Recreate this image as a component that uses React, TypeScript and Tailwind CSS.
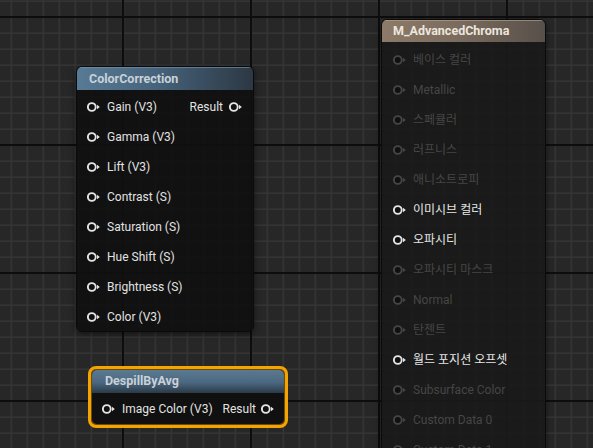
import React from "react";

const FONT = "font-['Roboto','Noto_Sans_CJK_KR',sans-serif]";

type PinProps = { on?: boolean };

function Pin({ on = true }: PinProps) {
  const c = on ? "#e4e4e4" : "#454545";
  return (
    <svg width="13" height="10" viewBox="0 0 13 10" className="shrink-0">
      <circle cx="4.8" cy="5" r="3.9" fill="#101010" stroke={c} strokeWidth="1.9" />
      <path d="M10 2.7 L12.8 5 L10 7.3 Z" fill={c} />
    </svg>
  );
}

function InRow({ label, on = true, right }: { label: string; on?: boolean; right?: string }) {
  return (
    <div className="h-[30px] flex items-center pl-[10px] pr-[11px]">
      <Pin on={on} />
      <span className={`ml-[7px] text-[12px] ${on ? "text-[#e2e2e2]" : "text-[#474747]"}`}>{label}</span>
      {right && (
        <div className="ml-auto flex items-center gap-[6px]">
          <span className="text-[12px] text-[#e2e2e2]">{right}</span>
          <Pin />
        </div>
      )}
    </div>
  );
}

function GridCanvas() {
  return (
    <svg className="absolute inset-0" width="593" height="448">
      <defs>
        <pattern id="minor" x="0" y="0" width="16" height="16" patternUnits="userSpaceOnUse">
          <rect x="10.5" y="0" width="1.6" height="16" fill="#343434" />
          <rect x="0" y="0.4" width="16" height="1.6" fill="#343434" />
        </pattern>
        <pattern id="major" x="0" y="0" width="128" height="128" patternUnits="userSpaceOnUse">
          <rect x="122" y="0" width="2" height="128" fill="#0d0d0d" />
          <rect x="0" y="16" width="128" height="2" fill="#0d0d0d" />
        </pattern>
      </defs>
      <rect width="593" height="448" fill="#272727" />
      <rect width="593" height="448" fill="url(#minor)" />
      <rect width="593" height="448" fill="url(#major)" />
    </svg>
  );
}

const colorCorrectionInputs = [
  "Gain (V3)",
  "Gamma (V3)",
  "Lift (V3)",
  "Contrast (S)",
  "Saturation (S)",
  "Hue Shift (S)",
  "Brightness (S)",
  "Color (V3)",
];

const materialInputs: { label: string; on: boolean }[] = [
  { label: "베이스 컬러", on: false },
  { label: "Metallic", on: false },
  { label: "스페큘러", on: false },
  { label: "러프니스", on: false },
  { label: "애니소트로피", on: false },
  { label: "이미시브 컬러", on: true },
  { label: "오파시티", on: true },
  { label: "오파시티 마스크", on: false },
  { label: "Normal", on: false },
  { label: "탄젠트", on: false },
  { label: "월드 포지션 오프셋", on: true },
  { label: "Subsurface Color", on: false },
  { label: "Custom Data 0", on: false },
  { label: "Custom Data 1", on: false },
];

export default function App() {
  return (
    <div className={`relative w-[593px] h-[448px] overflow-hidden ${FONT}`}>
      <GridCanvas />

      {/* ColorCorrection */}
      <div className="absolute left-[76px] top-[66px] w-[178px] h-[266px] rounded-[6px] border border-[#0a0a0a] bg-[#0f100f]/90 shadow-[0_2px_6px_rgba(0,0,0,0.5)] overflow-hidden">
        <div className="h-[23px] flex items-center pl-[12px] bg-[linear-gradient(90deg,#587a95_0%,#46637b_45%,#2c3843_100%)] border-t border-[#7d98ad]/60">
          <span className="text-[12.5px] font-bold text-[#c9d1d8]">ColorCorrection</span>
        </div>
        <div className="pt-[2px]">
          {colorCorrectionInputs.map((l, i) => (
            <InRow key={l} label={l} right={i === 0 ? "Result" : undefined} />
          ))}
        </div>
      </div>

      {/* M_AdvancedChroma */}
      <div className="absolute left-[381px] top-[19px] w-[165px] h-[470px] rounded-[6px] border border-[#0b0b0b] bg-[#181918]/90 shadow-[0_2px_6px_rgba(0,0,0,0.5)] overflow-hidden">
        <div className="h-[22px] flex items-center pl-[11px] bg-[linear-gradient(90deg,#8d7a68_0%,#7b6c5e_45%,#57504a_100%)] border-t border-[#b8a796]/60">
          <span className="text-[12.5px] font-bold text-[#ece6de]">M_AdvancedChroma</span>
        </div>
        <div className="pt-[3px]">
          {materialInputs.map((r) => (
            <div key={r.label} className="h-[30px] flex items-center pl-[11px]">
              <Pin on={r.on} />
              <span className={`ml-[7px] text-[12px] ${r.on ? "text-[#e6e6e6]" : "text-[#464646]"}`}>{r.label}</span>
            </div>
          ))}
        </div>
      </div>

      {/* DespillByAvg (selected) */}
      <div className="absolute left-[88px] top-[366px] w-[200px] h-[62px] rounded-[8px] border-[3px] border-[#f4a400] p-[1px] bg-[#6b4a10]">
        <div className="w-full h-full rounded-[5px] bg-[#0f100f] overflow-hidden">
          <div className="h-[23px] flex items-center pl-[13px] bg-[linear-gradient(180deg,#5b7a92_0%,#4a6780_55%,#2b3a47_100%)]">
            <span className="text-[12.5px] font-bold text-[#c9d1d8]">DespillByAvg</span>
          </div>
          <div className="h-[31px] flex items-center pl-[10px] pr-[10px]">
            <Pin />
            <span className="ml-[7px] text-[12px] text-[#e2e2e2]">Image Color (V3)</span>
            <div className="ml-auto flex items-center gap-[5px]">
              <span className="text-[12px] text-[#e2e2e2]">Result</span>
              <Pin />
            </div>
          </div>
        </div>
      </div>
    </div>
  );
}
